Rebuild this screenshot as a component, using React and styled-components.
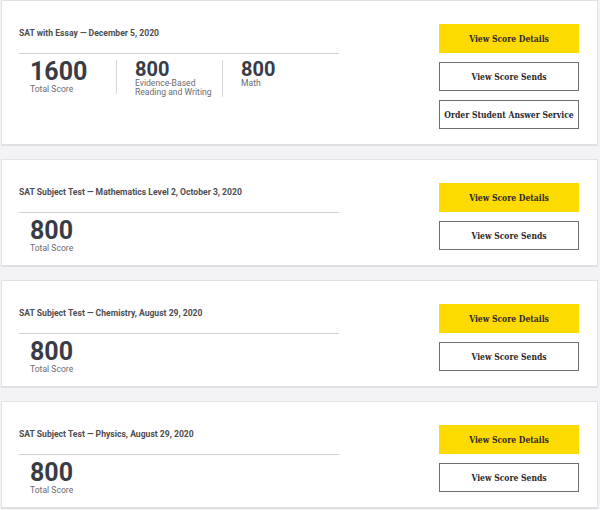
import React from "react";
import styled, { createGlobalStyle } from "styled-components";

const Global = createGlobalStyle`
  body {
    margin: 0;
    background: #f3f3f5;
    font-family: Roboto, "Liberation Sans", sans-serif;
  }
`;

const Page = styled.div`
  display: flex;
  flex-direction: column;
  gap: 13px;
  padding: 0 2px 0 1px;
`;

const Card = styled.div`
  display: flex;
  align-items: flex-start;
  justify-content: space-between;
  background: #fff;
  border: 1px solid #e2e2e4;
  border-bottom: 2px solid #e0e0e2;
  padding: 23px 18px 15px 17px;
`;

const Left = styled.div`
  width: 320px;
  display: flex;
  flex-direction: column;
`;

const Title = styled.div`
  font-size: 8.6px;
  font-weight: 700;
  color: #4d4d50;
  line-height: 18px;
  padding-bottom: 11px;
  border-bottom: 1px solid #cfcfd1;
`;

const Scores = styled.div`
  display: flex;
  align-items: flex-start;
  padding-top: 6px;
  margin-bottom: -4px;
`;

const Col = styled.div`
  width: ${(p) => p.$w}px;
  padding-left: ${(p) => (p.$first ? 11 : 18)}px;
  border-right: ${(p) => (p.$last ? "none" : "1px solid #d6d6d8")};
  box-sizing: border-box;
`;

const Num = styled.div`
  font-size: ${(p) => (p.$main ? 25 : 20)}px;
  font-weight: 700;
  color: #383c46;
  line-height: ${(p) => (p.$main ? 24 : 19)}px;
`;

const Label = styled.div`
  font-size: 8.6px;
  color: #6b6b6e;
  line-height: ${(p) => (p.$main ? 10 : 9)}px;
`;

const Buttons = styled.div`
  display: flex;
  flex-direction: column;
  gap: 9px;
  width: 140px;
`;

const Button = styled.div`
  height: 29px;
  box-sizing: border-box;
  display: flex;
  align-items: center;
  justify-content: center;
  font-family: "DejaVu Serif Condensed", "DejaVu Serif", serif;
  font-stretch: condensed;
  font-weight: 700;
  font-size: 8.5px;
  color: #2a2a2c;
  background: ${(p) => (p.$primary ? "#fedb00" : "#fff")};
  border: 1px solid ${(p) => (p.$primary ? "#fedb00" : "#6f6f72")};
`;

const tests = [
  {
    title: "SAT with Essay — December 5, 2020",
    scores: [
      { n: "1600", l: ["Total Score"], w: 98 },
      { n: "800", l: ["Evidence-Based", "Reading and Writing"], w: 106 },
      { n: "800", l: ["Math"], w: 90 },
    ],
    extra: true,
  },
  {
    title: "SAT Subject Test — Mathematics Level 2, October 3, 2020",
    scores: [{ n: "800", l: ["Total Score"], w: 98 }],
  },
  {
    title: "SAT Subject Test — Chemistry, August 29, 2020",
    scores: [{ n: "800", l: ["Total Score"], w: 98 }],
  },
  {
    title: "SAT Subject Test — Physics, August 29, 2020",
    scores: [{ n: "800", l: ["Total Score"], w: 98 }],
  },
];

export default function App() {
  return (
    <>
      <Global />
      <Page>
        {tests.map((t) => (
          <Card key={t.title}>
            <Left>
              <Title>{t.title}</Title>
              <Scores>
                {t.scores.map((s, i) => (
                  <Col
                    key={i}
                    $first={i === 0}
                    $last={i === t.scores.length - 1}
                    $w={s.w}
                  >
                    <Num $main={i === 0}>{s.n}</Num>
                    {s.l.map((line) => (
                      <Label key={line} $main={i === 0}>
                        {line}
                      </Label>
                    ))}
                  </Col>
                ))}
              </Scores>
            </Left>
            <Buttons>
              <Button $primary>View Score Details</Button>
              <Button>View Score Sends</Button>
              {t.extra && <Button>Order Student Answer Service</Button>}
            </Buttons>
          </Card>
        ))}
      </Page>
    </>
  );
}
